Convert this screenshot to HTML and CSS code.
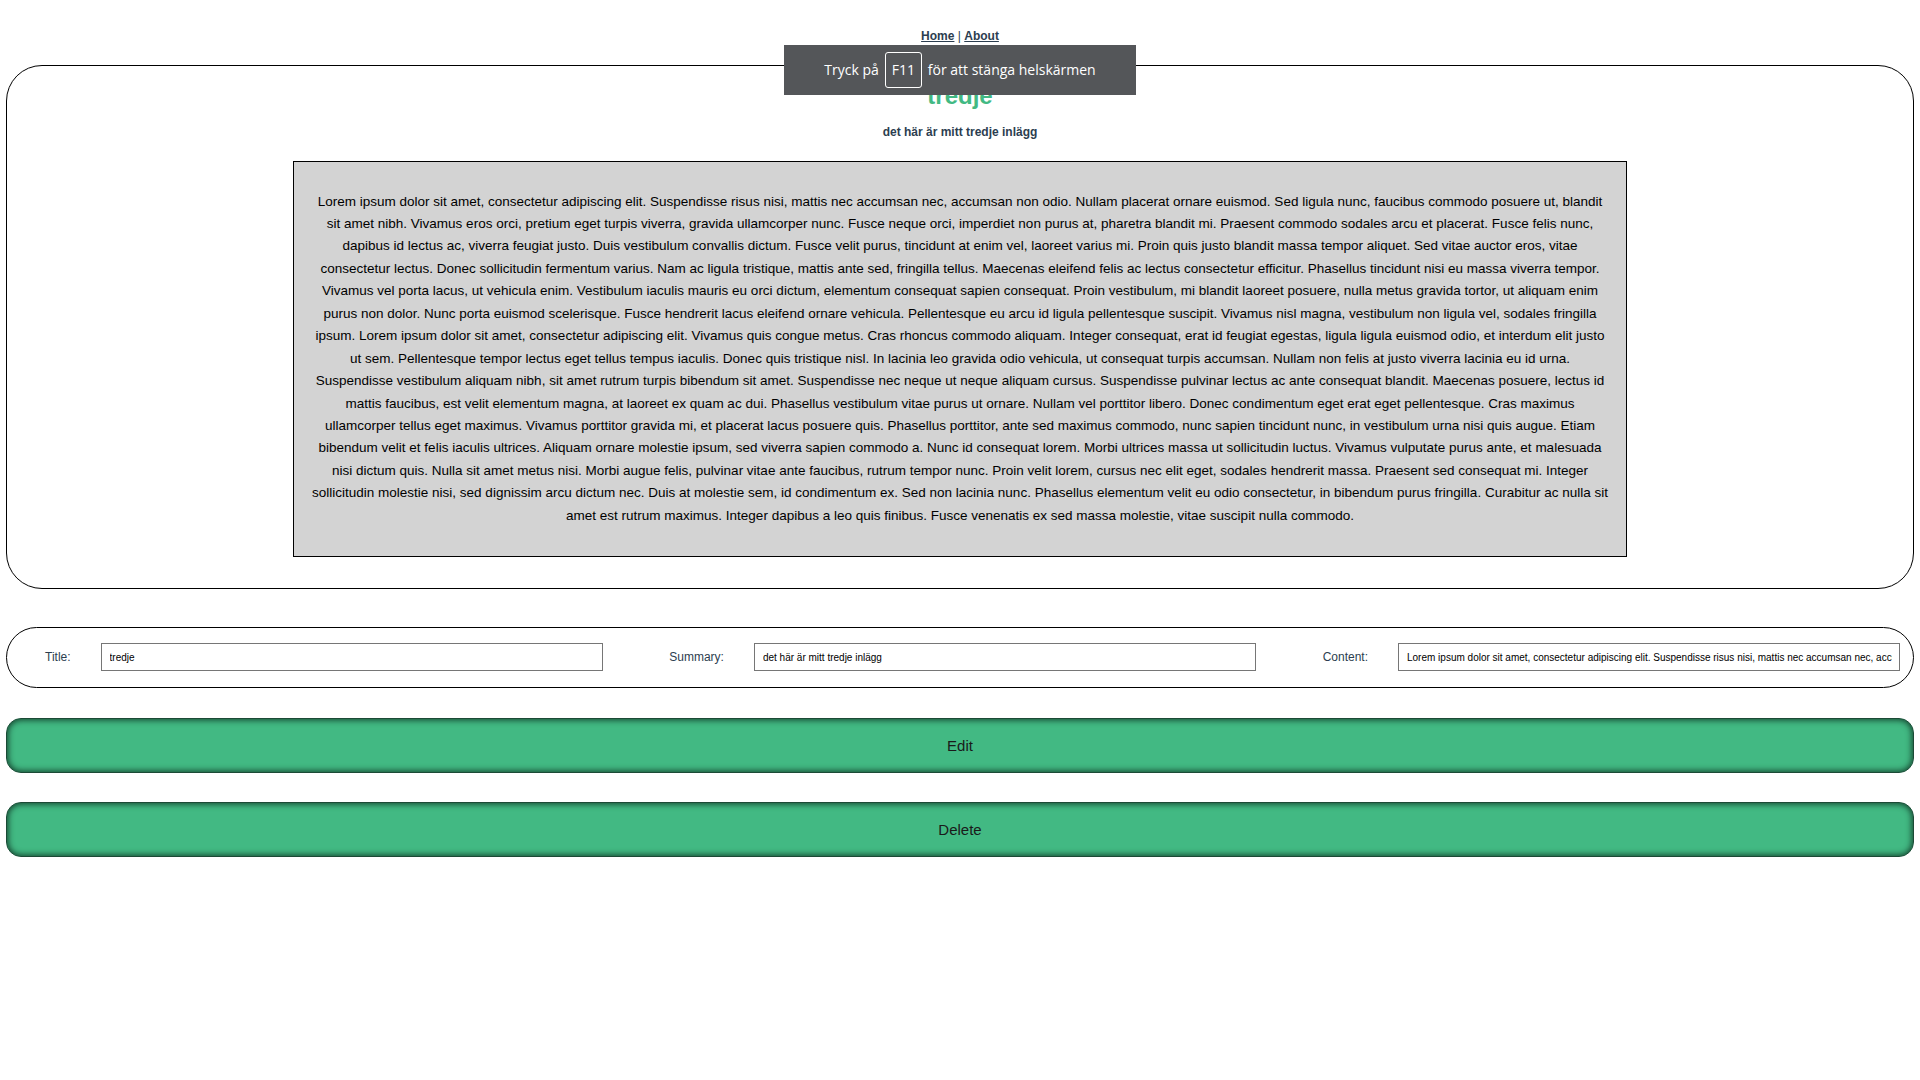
FILE: index.html
```html
<!DOCTYPE html>
<html lang="sv">
<head>
<meta charset="utf-8">
<title>tredje</title>
<link rel="stylesheet" href="styles.css">
</head>
<body>
<div class="app">
  <nav class="nav"><a href="#">Home</a> | <a href="#">About</a></nav>

  <section class="post">
    <h2 class="post-title">tredje</h2>
    <h5 class="post-summary">det här är mitt tredje inlägg</h5>
    <div class="post-content">
      <p>Lorem ipsum dolor sit amet, consectetur adipiscing elit. Suspendisse risus nisi, mattis nec accumsan nec, accumsan non odio. Nullam placerat ornare euismod. Sed ligula nunc, faucibus commodo posuere ut, blandit sit amet nibh. Vivamus eros orci, pretium eget turpis viverra, gravida ullamcorper nunc. Fusce neque orci, imperdiet non purus at, pharetra blandit mi. Praesent commodo sodales arcu et placerat. Fusce felis nunc, dapibus id lectus ac, viverra feugiat justo. Duis vestibulum convallis dictum. Fusce velit purus, tincidunt at enim vel, laoreet varius mi. Proin quis justo blandit massa tempor aliquet. Sed vitae auctor eros, vitae consectetur lectus. Donec sollicitudin fermentum varius. Nam ac ligula tristique, mattis ante sed, fringilla tellus. Maecenas eleifend felis ac lectus consectetur efficitur. Phasellus tincidunt nisi eu massa viverra tempor. Vivamus vel porta lacus, ut vehicula enim. Vestibulum iaculis mauris eu orci dictum, elementum consequat sapien consequat. Proin vestibulum, mi blandit laoreet posuere, nulla metus gravida tortor, ut aliquam enim purus non dolor. Nunc porta euismod scelerisque. Fusce hendrerit lacus eleifend ornare vehicula. Pellentesque eu arcu id ligula pellentesque suscipit. Vivamus nisl magna, vestibulum non ligula vel, sodales fringilla ipsum. Lorem ipsum dolor sit amet, consectetur adipiscing elit. Vivamus quis congue metus. Cras rhoncus commodo aliquam. Integer consequat, erat id feugiat egestas, ligula ligula euismod odio, et interdum elit justo ut sem. Pellentesque tempor lectus eget tellus tempus iaculis. Donec quis tristique nisl. In lacinia leo gravida odio vehicula, ut consequat turpis accumsan. Nullam non felis at justo viverra lacinia eu id urna. Suspendisse vestibulum aliquam nibh, sit amet rutrum turpis bibendum sit amet. Suspendisse nec neque ut neque aliquam cursus. Suspendisse pulvinar lectus ac ante consequat blandit. Maecenas posuere, lectus id mattis faucibus, est velit elementum magna, at laoreet ex quam ac dui. Phasellus vestibulum vitae purus ut ornare. Nullam vel porttitor libero. Donec condimentum eget erat eget pellentesque. Cras maximus ullamcorper tellus eget maximus. Vivamus porttitor gravida mi, et placerat lacus posuere quis. Phasellus porttitor, ante sed maximus commodo, nunc sapien tincidunt nunc, in vestibulum urna nisi quis augue. Etiam bibendum velit et felis iaculis ultrices. Aliquam ornare molestie ipsum, sed viverra sapien commodo a. Nunc id consequat lorem. Morbi ultrices massa ut sollicitudin luctus. Vivamus vulputate purus ante, et malesuada nisi dictum quis. Nulla sit amet metus nisi. Morbi augue felis, pulvinar vitae ante faucibus, rutrum tempor nunc. Proin velit lorem, cursus nec elit eget, sodales hendrerit massa. Praesent sed consequat mi. Integer sollicitudin molestie nisi, sed dignissim arcu dictum nec. Duis at molestie sem, id condimentum ex. Sed non lacinia nunc. Phasellus elementum velit eu odio consectetur, in bibendum purus fringilla. Curabitur ac nulla sit amet est rutrum maximus. Integer dapibus a leo quis finibus. Fusce venenatis ex sed massa molestie, vitae suscipit nulla commodo.</p>
    </div>
  </section>

  <form class="edit-form">
    <div class="field">
      <label class="field-label" for="title">Title:</label>
      <input class="field-input" id="title" type="text" value="tredje">
    </div>
    <div class="field">
      <label class="field-label" for="summary">Summary:</label>
      <input class="field-input" id="summary" type="text" value="det här är mitt tredje inlägg">
    </div>
    <div class="field">
      <label class="field-label" for="content">Content:</label>
      <input class="field-input" id="content" type="text" value="Lorem ipsum dolor sit amet, consectetur adipiscing elit. Suspendisse risus nisi, mattis nec accumsan nec, accumsan non odio. Nullam placerat ornare euismod.">
    </div>
  </form>

  <button class="action-btn edit-btn" type="button">Edit</button>
  <button class="action-btn delete-btn" type="button">Delete</button>
</div>

<div class="fs-notice">
  <span>Tryck på</span>
  <span class="fs-key">F11</span>
  <span>för att stänga helskärmen</span>
</div>
</body>
</html>
```

FILE: styles.css
```css
html, body {
  margin: 0;
  padding: 0;
  background: #ffffff;
}

body {
  font-family: "Liberation Sans", Arial, Helvetica, sans-serif;
  color: #2c3e50;
}

.app {
  display: flex;
  flex-direction: column;
  align-items: stretch;
}

.nav {
  text-align: center;
  font-size: 12px;
  line-height: 14px;
  padding-top: 29px;
  height: 65px;
  box-sizing: border-box;
}

.nav a {
  color: #2c3e50;
  font-weight: bold;
  text-decoration: underline;
}

.post {
  margin: 0 6px;
  border: 1px solid #000;
  border-radius: 36px;
  display: flex;
  flex-direction: column;
  align-items: center;
  padding-bottom: 31px;
}

.post-title {
  margin: 15.5px 0 0;
  font-size: 24px;
  line-height: 28px;
  font-weight: bold;
  color: #42b983;
}

.post-summary {
  margin: 15px 0 0;
  font-size: 12px;
  line-height: 14px;
  font-weight: bold;
  color: #2c3e50;
}

.post-content {
  margin-top: 22px;
  width: 70%;
  box-sizing: border-box;
  background: #d3d3d3;
  border: 1px solid #000;
  padding: 29px 16px 28.5px;
  text-align: center;
}

.post-content p {
  margin: 0;
  font-size: 13.5px;
  line-height: 22.45px;
  color: #000;
}

.edit-form {
  margin: 38px 6px 0;
  height: 61px;
  box-sizing: border-box;
  border: 1px solid #000;
  border-radius: 31px;
  display: flex;
  align-items: center;
  justify-content: space-between;
  padding: 0 13px 0 38px;
}

.field {
  display: flex;
  align-items: center;
}

.field-label {
  font-size: 12px;
  color: #2c3e50;
  margin-right: 30px;
}

.field-input {
  width: 502px;
  height: 28px;
  box-sizing: border-box;
  border: 1px solid #767676;
  border-radius: 0;
  padding: 0 7px 0 8px;
  font-family: "Liberation Sans", Arial, sans-serif;
  font-size: 10px;
  color: #000;
  background: #fff;
  outline: none;
}

.action-btn {
  margin: 0 6px;
  height: 55px;
  border: 1px solid #1c4a36;
  border-radius: 15px;
  background: #42b983;
  box-shadow: inset 0 0 6px 1px #123d2a;
  font-family: "Liberation Sans", Arial, sans-serif;
  font-size: 15px;
  color: #1a1a1a;
  cursor: pointer;
}

.edit-btn {
  margin-top: 30px;
}

.delete-btn {
  margin-top: 29px;
}

.fs-notice {
  position: absolute;
  top: 45px;
  left: 50%;
  transform: translateX(-50%);
  width: 352px;
  height: 50px;
  box-sizing: border-box;
  background: #545659;
  color: #ffffff;
  display: flex;
  align-items: center;
  justify-content: center;
  gap: 6px;
  font-family: "Open Sans", "Noto Sans", sans-serif;
  font-size: 14px;
  padding-bottom: 1px;
}

.fs-key {
  border: 1px solid #ffffff;
  border-radius: 3px;
  height: 34px;
  width: 29px;
  padding: 0 3px;
  display: flex;
  align-items: center;
  justify-content: center;
}
```
